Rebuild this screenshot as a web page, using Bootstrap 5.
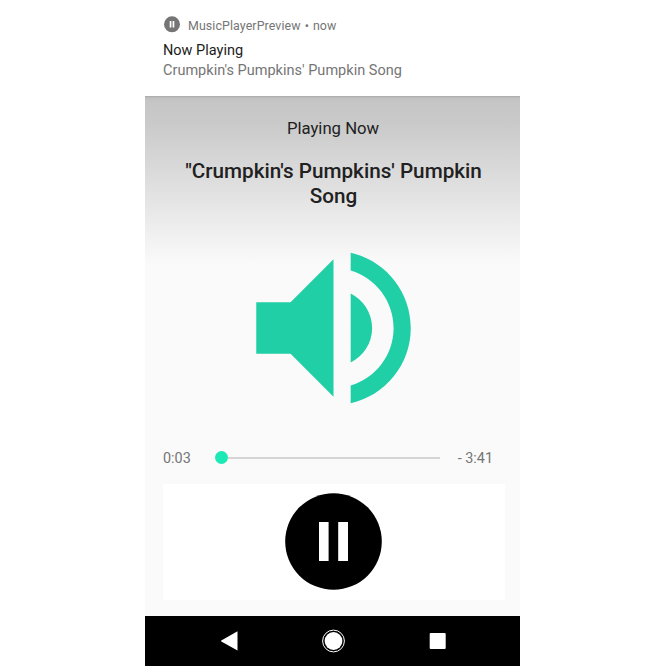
<!DOCTYPE html>
<html lang="en">
<head>
<meta charset="utf-8">
<meta name="viewport" content="width=device-width, initial-scale=1">
<title>MusicPlayerPreview</title>
<link href="https://cdn.jsdelivr.net/npm/bootstrap@5.3.0/dist/css/bootstrap.min.css" rel="stylesheet">
<style>
  body { font-family: Roboto, "Liberation Sans", sans-serif; background: #fff; color: #212121; }
  svg { display: block; flex: none; }
  .phone { width: 375px; height: 666px; margin-left: 145px; background: #fafafa; }
  .notice { height: 96px; padding: 16px 18px 0; color: #757575; }
  .notice-app { font-size: 12.4px; line-height: 17px; gap: 8px; letter-spacing: .1px; word-spacing: .8px; }
  .notice-title { font-size: 14.5px; line-height: 20px; margin-top: 6px; color: #1c1c1c; }
  .notice-text { font-size: 14.5px; line-height: 20px; letter-spacing: .015px; }
  .player { height: 520px; background: linear-gradient(#a2a2a2 0, #b9b9b9 1px, #c3c3c3 3px, #c6c6c6 7px, #c9c9c9 25px, #fafafa 168px); }
  .heading-now { font-size: 16.7px; line-height: 20px; padding: 23px 0 0 1px; }
  .song { font-size: 20.7px; line-height: 25px; font-weight: 500; margin-top: 20px; padding-left: 2px; }
  .speaker-wrap { padding: 16px 0 0 1px; }
  .seek { height: 20px; margin-top: 17px; padding: 0 27px 0 18px; font-size: 14.4px; line-height: 20px; color: #757575; }
  .seek > span { padding-top: 2px; }
  .knob { width: 13px; height: 13px; background: #1de9b6; }
  .rail { height: 2px; background: #d5d5d5; }
  .slider { width: 225px; margin: 0 0 1px 24.5px; }
  .controls { height: 116px; margin: 16px 15px 0 18px; padding-top: 9px; }
  .controls svg { margin-left: 122px; }
  .softkeys { height: 50px; background: #000; }
</style>
<script src="https://cdn.jsdelivr.net/npm/bootstrap@5.3.0/dist/js/bootstrap.bundle.min.js"></script>
</head>
<body>
<main class="phone overflow-hidden">
  <header class="notice bg-white">
    <div class="notice-app d-flex align-items-center">
      <svg width="17" height="19" viewBox="0 0 17 19"><circle cx="9" cy="8.3" r="8" fill="#757575"/><path d="M6.7 5.1h1.7v6.4H6.7zM9.6 5.1h1.7v6.4H9.6z" fill="#fff"/></svg>
      <span>MusicPlayerPreview • now</span>
    </div>
    <div class="notice-title">Now Playing</div>
    <div class="notice-text">Crumpkin's Pumpkins' Pumpkin Song</div>
  </header>
  <section class="player">
    <div class="heading-now text-center">Playing Now</div>
    <h1 class="song mb-0 text-center">"Crumpkin's Pumpkins' Pumpkin<br>Song</h1>
    <div class="speaker-wrap">
      <svg class="mx-auto" width="206" height="206" viewBox="-.06 0 24 24" fill="#20cfa5"><path d="M3 9v6h4l5 5V4L7 9H3zm13.5 3c0-1.77-1.02-3.29-2.5-4.03v8.05c1.48-.73 2.5-2.25 2.5-4.02zM14 3.23v2.06c2.89.86 5 3.54 5 6.71s-2.11 5.85-5 6.71v2.06c4.01-.91 7-4.49 7-8.77s-2.99-7.86-7-8.77z"/></svg>
    </div>
    <div class="seek d-flex align-items-center">
      <span>0:03</span>
      <div class="slider d-flex align-items-center"><div class="knob rounded-circle"></div><div class="rail flex-grow-1"></div></div>
      <span class="ms-auto">- 3:41</span>
    </div>
    <div class="controls bg-white">
      <svg width="98" height="98" viewBox="0 0 98 98"><circle cx="48.5" cy="48.5" r="48.3"/><path d="M34 29h9.6v39H34zM53.2 29H63v39h-9.8z" fill="#fff"/></svg>
    </div>
  </section>
  <footer class="softkeys">
    <svg width="375" height="50" viewBox="0 0 375 50" fill="#fff"><path d="M92.5 15.5v19L76.3 25.5q-.8-.5 0-1L92.5 15.2z"/><circle cx="188.5" cy="25" r="8.9"/><circle cx="188.5" cy="25" r="10.9" fill="none" stroke="#fff" stroke-width="1"/><rect x="284.7" y="17" width="16" height="16" rx="1"/></svg>
  </footer>
</main>
</body>
</html>
